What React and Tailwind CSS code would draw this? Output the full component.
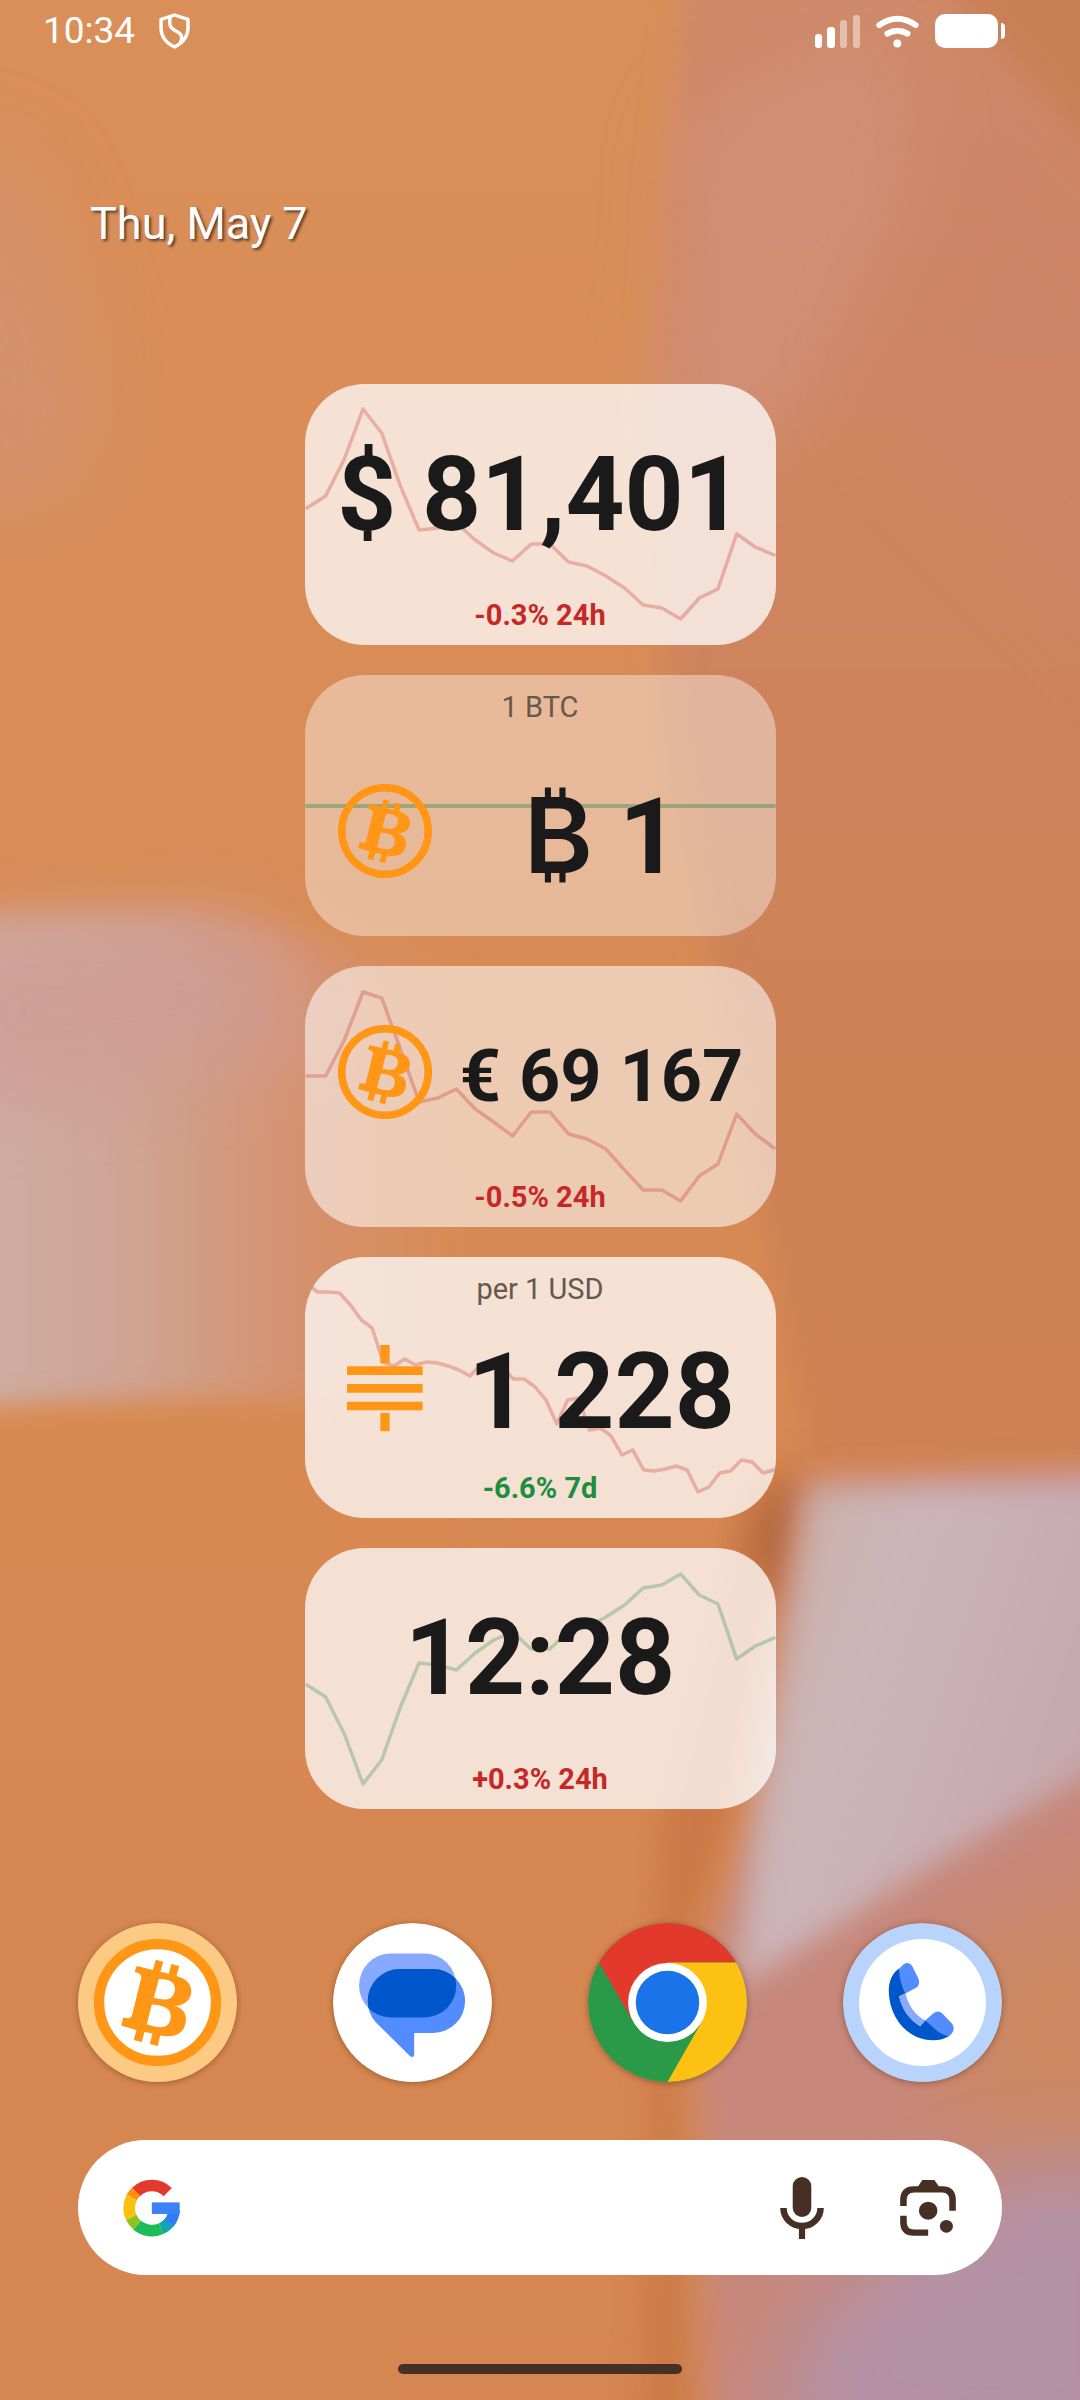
import { clsx } from 'clsx'

const usdTrend = [
  124, 112, 75, 25, 49, 102, 146, 144, 139, 156, 169, 177, 160, 160, 178, 182, 192, 204, 221, 224,
  235, 214, 205, 150, 163, 171,
]
const eurTrend = [
  110, 110, 74, 26, 32, 83, 136, 132, 123, 143, 156, 170, 146, 146, 168, 173, 183, 204, 224, 224,
  235, 210, 198, 148, 168, 182,
]
const satsTrend = [
  27, 35, 35, 36, 48, 63, 71, 105, 109, 102, 108, 105, 106, 109, 113, 119, 108, 106, 110, 122, 122,
  130, 143, 167, 143, 141, 173, 171, 179, 198, 193, 213, 214, 212, 209, 213, 235, 230, 216, 214,
  203, 205, 216, 213,
]

const widgets = [
  { id: 'usd', value: '$ 81,401', change: '-0.3% 24h', trend: usdTrend, bg: 'bg-white/75', size: 'text-[103px]' },
  { id: 'btc', sign: '₿', value: '1', caption: '1 BTC', icon: 'bitcoin', trend: [131, 131], up: true, bg: 'bg-white/40', size: 'text-[105px]' },
  { id: 'eur', value: '€ 69 167', change: '-0.5% 24h', icon: 'bitcoin', trend: eurTrend, bg: 'bg-white/55', size: 'text-[72px]' },
  { id: 'sats', value: '1 228', caption: 'per 1 USD', change: '-6.6% 7d', good: true, icon: 'sats', trend: satsTrend, bg: 'bg-white/75', size: 'text-[105px]' },
  { id: 'moscow', value: '12:28', change: '+0.3% 24h', trend: usdTrend.map((y) => 261 - y), up: true, bg: 'bg-white/75', size: 'text-[105px]' },
]

function Wallpaper() {
  return (
    <svg
      className="absolute inset-0 -z-10 h-full w-full"
      viewBox="0 0 706 1568"
      preserveAspectRatio="none"
      aria-hidden="true"
    >
      <defs>
        <filter id="soft" x="-50%" y="-50%" width="200%" height="200%">
          <feGaussianBlur stdDeviation="26" />
        </filter>
        <filter id="mid" x="-50%" y="-50%" width="200%" height="200%">
          <feGaussianBlur stdDeviation="10" />
        </filter>
        <linearGradient id="base" x1="0" y1="0" x2="0" y2="1">
          <stop offset="0" stopColor="#da8e58" />
          <stop offset="1" stopColor="#d68650" />
        </linearGradient>
        <linearGradient id="right" x1="0" y1="0" x2="0" y2="1">
          <stop offset="0" stopColor="#ce8a6a" />
          <stop offset="0.5" stopColor="#ce835c" />
          <stop offset="1" stopColor="#cf8152" />
        </linearGradient>
        <linearGradient id="petal" x1="0" y1="0" x2="1" y2="0">
          <stop offset="0" stopColor="#cdb0a4" />
          <stop offset="0.35" stopColor="#cfa597" />
          <stop offset="0.75" stopColor="#d5906a" />
          <stop offset="1" stopColor="#d88b57" />
        </linearGradient>
        <linearGradient id="lilac" x1="0" y1="0" x2="1" y2="0.4">
          <stop offset="0" stopColor="#ccaf9f" />
          <stop offset="0.4" stopColor="#ccb4ba" />
          <stop offset="1" stopColor="#c5a5ac" />
        </linearGradient>
      </defs>
      <rect width="706" height="1568" fill="url(#base)" />
      <path d="M-40 90L20 110L60 230L60 320L-40 350Z" fill="#d3926f" opacity="0.9" filter="url(#soft)" />
      <path d="M450 -40L434 130L425 300L440 500L530 960L760 960L760 -40Z" fill="url(#right)" filter="url(#mid)" />
      <path d="M450 80Q450 190 425 310L520 280L600 130L580 20Z" fill="#d39480" opacity="0.6" filter="url(#soft)" />
      <path d="M640 30L560 250L760 450L760 180Z" fill="#cb8468" opacity="0.6" filter="url(#soft)" />
      <path d="M610 -20L760 -20L760 150Z" fill="#c97f55" filter="url(#mid)" />
      <path d="M-40 602L120 596L290 630L290 924L-40 927Z" fill="url(#petal)" filter="url(#mid)" />
      <path d="M-40 610L170 600L210 690L-40 725Z" fill="#d09c94" opacity="0.85" filter="url(#soft)" />
      <path d="M-40 926Q120 905 290 925L290 1020L-40 1020Z" fill="#d88951" filter="url(#mid)" />
      <path d="M485 975L525 950L480 1180L440 1300L450 1600L420 1600L430 1200Z" fill="#c87645" opacity="0.8" filter="url(#mid)" />
      <path d="M505 975L530 970L515 1060L490 1010Z" fill="#b4683f" filter="url(#mid)" />
      <path d="M525 968L760 958L760 1620L462 1620L455 1290L500 1170Z" fill="#c7877a" filter="url(#mid)" />
      <path d="M530 972L760 966L760 1130L600 1225L480 1300L495 1180Z" fill="url(#lilac)" filter="url(#mid)" />
      <path d="M620 1270L760 1220L760 1410L620 1390Z" fill="#cb8862" filter="url(#soft)" />
      <path d="M650 1425L760 1415L760 1620L500 1610L530 1510Z" fill="#b392a6" filter="url(#soft)" />
    </svg>
  )
}

function StatusBar() {
  return (
    <header className="flex h-[60px] items-center justify-between pt-0.5 pr-[75px] pl-[43px] text-white">
      <div className="flex items-center gap-6">
        <time className="text-[37px] leading-10">10:34</time>
        <svg
          viewBox="467 40 90 108"
          preserveAspectRatio="none"
          className="h-[36px] w-[31px]"
          fill="none"
          stroke="#fff"
          strokeWidth="10"
        >
          <path strokeLinejoin="round" d="M512 46L551 59V88Q549 124 512 142Q475 124 473 88V59Z" />
          <path d="M500 51C494 78 500 85 520 96C536 106 535 115 529 130" />
        </svg>
      </div>
      <div className="flex items-center gap-4">
        <svg viewBox="0 0 45 33" className="h-[33px] w-[45px]" fill="#fff">
          <rect x="0" y="19" width="7" height="14" rx="3" />
          <rect x="12" y="12" width="8" height="21" rx="3" />
          <rect x="25" y="5" width="7" height="28" rx="3" opacity="0.45" />
          <rect x="38" y="0" width="7" height="33" rx="3" opacity="0.45" />
        </svg>
        <svg viewBox="287 43 131 99" className="h-[33px] w-[43px]" fill="none" stroke="#fff" strokeLinecap="round">
          <path d="M297 73Q352 34 408 73" strokeWidth="18" />
          <path d="M322 99Q352 81 383 99" strokeWidth="18" />
          <circle cx="352" cy="129" r="12" fill="#fff" stroke="none" />
        </svg>
        <svg viewBox="0 0 70 34" className="h-[34px] w-[70px]" fill="#fff">
          <rect width="63" height="34" rx="10" />
          <path d="M66 9Q70 9 70 13V21Q70 25 66 25Z" />
        </svg>
      </div>
    </header>
  )
}

// ring and tilted B, shared by the widgets and the dock
function BitcoinMark({ className, fill = 'none' }) {
  return (
    <svg viewBox="102 116 380 380" className={className} aria-hidden="true">
      <circle cx="292" cy="306" r="175" fill={fill} stroke="#ff9615" strokeWidth="31" />
      <path
        fill="#ff9615"
        fillRule="evenodd"
        d="M230 197L278 209L287 178L309 184L301 214L326 220L333 191L357 197L349 227C380 236 394 251 393 276C391 301 368 316 343 316C367 323 378 338 377 358C374 398 346 413 300 405L293 436L269 430L277 399L253 394L245 424L221 418L229 388L183 375L190 350C206 356 213 354 216 343L243 234C246 224 238 218 223 215ZM296 236L281 292C307 299 324 299 333 291C346 279 349 256 336 246C328 239 316 237 296 236ZM275 312L260 371C289 381 309 383 320 375C333 365 336 341 325 328C315 317 298 314 275 312Z"
      />
    </svg>
  )
}

function SatsMark({ className }) {
  return (
    <svg viewBox="143 301 282 282" className={className} fill="#ff9615" aria-hidden="true">
      <path d="M270 313H298V368H270ZM270 517H298V572H270ZM170 377H397V403H170ZM170 430H397V456H170ZM170 483H397V509H170Z" />
    </svg>
  )
}

function Sparkline({ points, up }) {
  const step = 467 / (points.length - 1)
  return (
    <svg
      className="absolute inset-0 -z-10 h-full w-full"
      viewBox="0 0 471 261"
      preserveAspectRatio="none"
      aria-hidden="true"
    >
      <polyline
        points={points.map((y, i) => `${2 + i * step},${y}`).join(' ')}
        fill="none"
        stroke={up ? '#2a8a4d' : '#c6352f'}
        strokeOpacity={points.length > 2 ? 0.3 : 0.4}
        strokeWidth={points.length > 2 ? 3.5 : 4}
        strokeLinecap="round"
        strokeLinejoin="round"
      />
    </svg>
  )
}

function Widget({ widget }) {
  const { sign, value, caption, change, good, icon, trend, up, bg, size } = widget
  return (
    <article className={clsx('relative isolate flex h-[261px] flex-col overflow-hidden rounded-[60px]', bg)}>
      <Sparkline points={trend} up={up} />
      {caption && <p className="h-[50px] pt-4 text-center text-[29px] leading-8 text-[#66574f]">{caption}</p>}
      <div className={clsx('flex flex-1 items-center', icon && 'gap-2 pr-3 pl-[33px]')}>
        {icon === 'bitcoin' && <BitcoinMark className="size-[94px] shrink-0" />}
        {icon === 'sats' && <SatsMark className="size-[94px] shrink-0" />}
        <p className={clsx('flex-1 pt-2.5 text-center leading-none font-bold whitespace-nowrap text-[#1a1a1a]', size)}>
          {sign && <span className="font-[Inter,sans-serif] font-semibold">{sign}</span>}
          {sign && ' '}
          {value}
        </p>
      </div>
      {change && (
        <p
          className={clsx(
            'h-[50px] pt-1 text-center text-[29px] leading-8 font-bold',
            good ? 'text-[#1e8e3e]' : 'text-[#c62828]',
          )}
        >
          {change}
        </p>
      )}
    </article>
  )
}

function MessagesIcon() {
  return (
    <svg viewBox="820 69 476 476" className="size-full" aria-hidden="true">
      <defs>
        <clipPath id="bubble">
          <rect x="898" y="160" width="291" height="192" rx="96" />
        </clipPath>
      </defs>
      <circle cx="1058" cy="307" r="238" fill="#fff" />
      <rect x="898" y="160" width="291" height="192" rx="96" fill="#87a9ff" />
      <path
        d="M1020 207H1120A95 95 0 0 1 1120 398H1063V464Q1062 474 1051 468L948 366Q924 340 924 302A95 95 0 0 1 1020 207Z"
        fill="#528cff"
      />
      <rect x="924" y="207" width="291" height="191" rx="95" fill="#0057cc" clipPath="url(#bubble)" />
    </svg>
  )
}

function ChromeIcon() {
  return (
    <svg viewBox="54 69 476 476" className="size-full" aria-hidden="true">
      <circle cx="292" cy="307" r="238" fill="#2a9a48" />
      <path d="M87 187A238 238 0 0 1 498 187H292V307L190 366Z" fill="#e3392d" />
      <path d="M498 187A238 238 0 0 1 292 545L394 366L292 307V187Z" fill="#fdc113" />
      <circle cx="292" cy="307" r="118" fill="#fff" />
      <circle cx="292" cy="307" r="95" fill="#1a73e8" />
    </svg>
  )
}

function PhoneIcon() {
  return (
    <svg viewBox="820 69 476 476" className="size-full" aria-hidden="true">
      <circle cx="1058" cy="307" r="238" fill="#b8d4fd" />
      <circle cx="1058" cy="307" r="190" fill="#fff" />
      <path
        d="M988 205C966 220 957 245 957 274C959 355 1015 420 1090 420C1110 420 1125 415 1137 408L1066 360L1051 378C1018 358 996 325 988 288L1007 280Z"
        fill="#0057cc"
      />
      <path d="M988 289L1007 279C1015 315 1035 343 1066 361L1051 378C1018 358 996 325 988 289Z" fill="#87a9ff" />
      <path d="M988 205L1001 193Q1018 183 1027 198L1046 236Q1052 252 1040 262L1007 280Q988 245 988 205Z" fill="#528cff" />
      <path d="M1066 361L1090 340Q1105 328 1118 341L1146 370Q1158 386 1144 402L1137 408Q1118 404 1104 394Z" fill="#528cff" />
    </svg>
  )
}

function Dock() {
  const button = 'size-[159px] overflow-hidden rounded-full shadow-[0_1px_6px_rgba(80,40,20,0.45)]'
  return (
    <nav className="mt-[114px] flex justify-between px-[78px]" aria-label="Dock">
      <button type="button" aria-label="Bitcoin" className={clsx(button, 'bg-[#fdca84] p-4')}>
        <BitcoinMark className="size-full" fill="#fff" />
      </button>
      <button type="button" aria-label="Messages" className={button}>
        <MessagesIcon />
      </button>
      <button type="button" aria-label="Chrome" className={button}>
        <ChromeIcon />
      </button>
      <button type="button" aria-label="Phone" className={button}>
        <PhoneIcon />
      </button>
    </nav>
  )
}

function SearchBar() {
  return (
    <form role="search" className="mx-[78px] mt-[58px] flex h-[135px] items-center rounded-full bg-white pr-[46px] pl-[45px]">
      <svg viewBox="190 176 172 174" className="h-[58px] w-[57px] shrink-0" fill="none" strokeWidth="35" aria-hidden="true">
        <path d="M229 215A68 68 0 0 1 325 215" stroke="#e3392d" />
        <path d="M216 231A68 68 0 0 1 230 214" stroke="#ff9011" />
        <path d="M215 292A68 68 0 0 1 217 231" stroke="#fcc010" />
        <path d="M233 315A68 68 0 0 1 215 292" stroke="#8fc31f" />
        <path d="M306 325A68 68 0 0 1 233 315" stroke="#1fbb59" />
        <path d="M330 307A68 68 0 0 1 306 325" stroke="#12a5b0" />
        <path d="M344 268A68 68 0 0 1 329 308" stroke="#2f7cf6" />
        <path d="M277 263.500H361" stroke="#3b82f6" />
      </svg>
      <input type="search" aria-label="Search" className="mx-6 h-full min-w-0 flex-1 text-[37px] outline-none" />
      <button type="button" aria-label="Voice search" className="mr-[76px] shrink-0">
        <svg viewBox="697 171 128 186" preserveAspectRatio="none" className="h-[62px] w-[44px]" fill="#463025">
          <rect x="734" y="171" width="54" height="120" rx="27" />
          <path d="M707 264A54 54 0 0 0 815 264" fill="none" stroke="#463025" strokeWidth="19" />
          <rect x="752" y="322" width="18" height="35" />
        </svg>
      </button>
      <button type="button" aria-label="Search with camera" className="shrink-0">
        <svg viewBox="1045 180 163 168" preserveAspectRatio="none" className="size-[56px]" fill="#463025">
          <g fill="none" stroke="#463025" strokeWidth="19">
            <path d="M1055 258V240Q1055 208 1086 208H1168Q1198 208 1198 240V272" />
            <path d="M1055 287V306Q1055 338 1086 338H1127" />
          </g>
          <path d="M1110 180H1145L1161 203H1095Z" />
          <circle cx="1127" cy="272" r="27" />
          <circle cx="1180" cy="319" r="19" />
        </svg>
      </button>
    </form>
  )
}

export default function App() {
  return (
    <div className="relative isolate flex min-h-screen flex-col overflow-hidden font-[Roboto,sans-serif]">
      <Wallpaper />
      <StatusBar />
      <p className="mt-[137px] px-[90px] text-[45px] leading-[54px] text-white [text-shadow:2px_2px_3px_rgba(0,0,0,0.6)]">
        Thu, May 7
      </p>
      <main className="mx-auto mt-[133px] flex w-full max-w-[471px] flex-col gap-[30px]">
        {widgets.map((widget) => (
          <Widget key={widget.id} widget={widget} />
        ))}
      </main>
      <Dock />
      <SearchBar />
      <div className="mx-auto mt-[89px] mb-[25px] h-[10px] w-[284px] rounded-full bg-[#463025]" />
    </div>
  )
}
